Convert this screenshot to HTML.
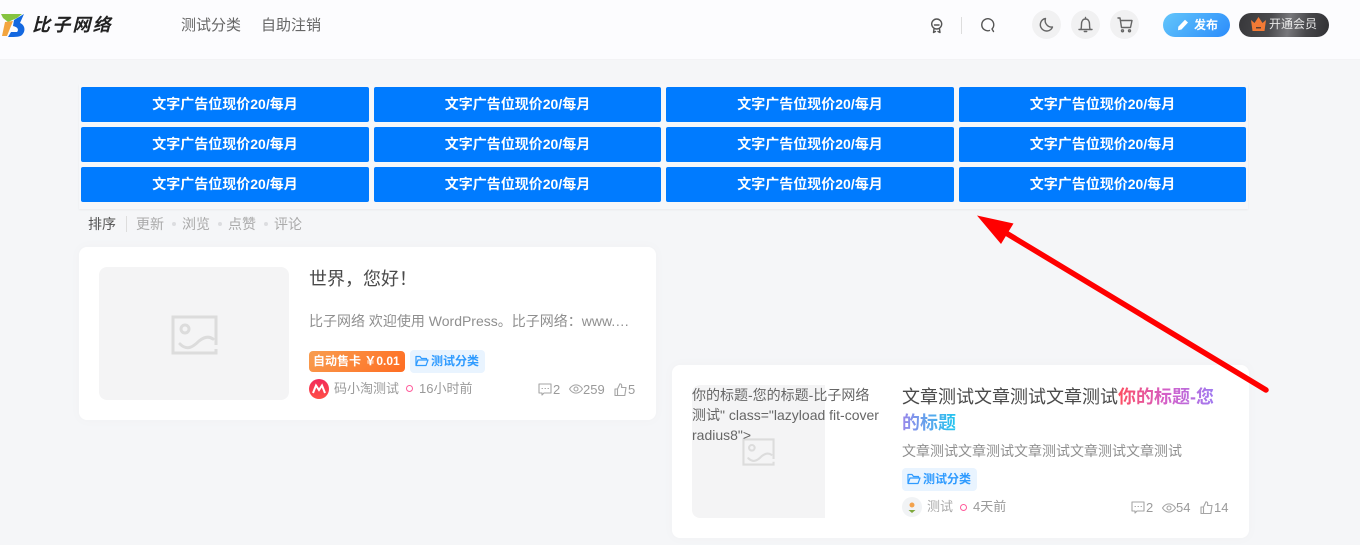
<!DOCTYPE html>
<html lang="zh"><head><meta charset="utf-8"><title>比子网络</title>
<style>
*{box-sizing:border-box;margin:0;padding:0}
html,body{width:1360px;height:545px;overflow:hidden}
body{position:relative;background:#f5f6f8;font-family:"Liberation Sans","Noto Sans CJK SC",sans-serif;color:#4e5358}
.a{position:absolute;white-space:nowrap}
.ad{position:absolute;height:35px;background:#007bff;border-radius:2px;color:#fff;font-size:14px;font-weight:700;line-height:34px;text-align:center}
.card{position:absolute;background:#fff;border-radius:8px;box-shadow:0 0 10px rgba(116,116,116,.04)}
.tag{position:absolute;height:23px;background:#e9f4ff;border-radius:4px;color:#2f9bff;font-size:12px;font-weight:700;line-height:23px;white-space:nowrap}
.m{font-size:12.5px;color:#9a9a9a;line-height:18px}
svg{position:absolute;overflow:visible}
.ic{fill:none;stroke:#555;stroke-width:1.4;stroke-linecap:round;stroke-linejoin:round}
.g{fill:none;stroke:#a5a5a5;stroke-width:1.1;stroke-linecap:round;stroke-linejoin:round}
.dot{position:absolute;width:7px;height:7px;border:1.5px solid #ff5b9b;border-radius:50%}
.sd{position:absolute;width:4px;height:4px;border-radius:50%;background:#dcdde0}
</style></head><body>

<div class="a" style="left:0;top:0;width:1360px;height:60px;background:#fcfcfe;border-bottom:1px solid #f3f3f5"></div>

<svg style="left:0;top:13px" width="26" height="24" viewBox="0 0 26 24">
<path d="M1 1H22L17 5L8 9L3 5Z" fill="#86c440"/>
<path d="M5 9L13 8L7 23H2Z" fill="#f3a53f"/>
<path d="M14 7L24 1L20 10C25 12 26 18 22 22C20 24 16 24 8 24L11 19H17C19 17 18 14 13 13Z" fill="#1468e0"/>
</svg>
<div class="a" style="left:32px;top:13px;font-size:18px;font-weight:700;letter-spacing:2.2px;line-height:24px;color:#222;font-style:italic">比子网络</div>
<div class="a" style="left:181px;top:16px;font-size:15px;line-height:20px;color:#666">测试分类</div>
<div class="a" style="left:261px;top:16px;font-size:15px;line-height:20px;color:#666">自助注销</div>

<svg style="left:930px;top:18px" width="14" height="16" viewBox="0 0 14 16"><g class="ic"><circle cx="6.700" cy="6" r="5"/><path d="M4.500 7H9M4 11L3.500 14.500L5.500 13.500M9.500 11L10 14.500L8 13.500"/></g></svg>
<div class="a" style="left:961px;top:17px;width:1px;height:17px;background:#ddd"></div>
<svg style="left:980px;top:18px" width="15" height="15" viewBox="0 0 15 15"><g class="ic"><path d="M12 11A6 6 0 1 0 9.500 12.500M12 11L13.500 13.500"/></g></svg>
<div class="a" style="left:1032px;top:10px;width:29px;height:29px;border-radius:50%;background:#f1f1f2"></div>
<div class="a" style="left:1071px;top:10px;width:29px;height:29px;border-radius:50%;background:#f1f1f2"></div>
<div class="a" style="left:1110px;top:10px;width:29px;height:29px;border-radius:50%;background:#f1f1f2"></div>
<svg style="left:1039px;top:17px" width="15" height="15" viewBox="0 0 15 15"><path class="ic" style="stroke:#666" d="M6.500 1.500A6.300 6.300 0 1 0 13.500 10A6.500 6.500 0 0 1 6.500 1.500Z"/></svg>
<svg style="left:1078px;top:17px" width="15" height="15" viewBox="0 0 15 15"><path class="ic" style="stroke:#666" d="M1 12.500H14M3 12.500C3.500 10 3.500 9 3.500 7C3.500 4 5 2 7.500 2C10 2 11.500 4 11.500 7C11.500 9 11.500 10 12 12.500M6.300 14.500H8.700M7.500 .5V2"/></svg>
<svg style="left:1117px;top:17px" width="16" height="16" viewBox="0 0 16 16"><g class="ic" style="stroke:#666"><path d="M1 1H3L4.500 10.500H13.500L15 3.500H3.500"/><circle cx="5.500" cy="13.800" r="1"/><circle cx="12.500" cy="13.800" r="1"/></g></svg>

<div class="a" style="left:1163px;top:13px;width:67px;height:24px;border-radius:12px;background:linear-gradient(135deg,#63c6fb,#2b8cfb);color:#fff;font-size:12px;font-weight:700;line-height:24px;padding-left:31px">发布</div>
<svg style="left:1177px;top:19px" width="12" height="12" viewBox="0 0 12 12"><path d="M8 .8L11 3.500L4.500 10.500L1 11.300L1.300 7.800Z" fill="#fff"/></svg>
<div class="a" style="left:1239px;top:13px;width:90px;height:24px;border-radius:12px;background:linear-gradient(100deg,#37373a 0,#4a4a4d 35%,#77777b 55%,#47474a 75%,#303033 100%);color:#e8e8e8;font-size:12px;line-height:23px;padding-left:30px">开通会员</div>
<svg style="left:1251px;top:16px" width="15" height="16" viewBox="0 0 15 16"><path d="M0 4L3.500 7L7.500 1L11.500 7L15 4L13.500 15H1.500Z" fill="#f37a35"/><rect x="5" y="11" width="5" height="1.500" fill="#5a4036"/></svg>

<div class="a" style="left:79px;top:84px;width:1169px;height:125px;background:#f6f7f9;box-shadow:0 1px 2px rgba(0,0,0,.05)"></div>
<div class="ad" style="left:81px;top:87px;width:288px">文字广告位现价20/每月</div>
<div class="ad" style="left:374px;top:87px;width:287px">文字广告位现价20/每月</div>
<div class="ad" style="left:666px;top:87px;width:288px">文字广告位现价20/每月</div>
<div class="ad" style="left:959px;top:87px;width:287px">文字广告位现价20/每月</div>
<div class="ad" style="left:81px;top:127px;width:288px">文字广告位现价20/每月</div>
<div class="ad" style="left:374px;top:127px;width:287px">文字广告位现价20/每月</div>
<div class="ad" style="left:666px;top:127px;width:288px">文字广告位现价20/每月</div>
<div class="ad" style="left:959px;top:127px;width:287px">文字广告位现价20/每月</div>
<div class="ad" style="left:81px;top:167px;width:288px">文字广告位现价20/每月</div>
<div class="ad" style="left:374px;top:167px;width:287px">文字广告位现价20/每月</div>
<div class="ad" style="left:666px;top:167px;width:288px">文字广告位现价20/每月</div>
<div class="ad" style="left:959px;top:167px;width:287px">文字广告位现价20/每月</div>

<div class="a" style="left:88px;top:215px;font-size:14px;line-height:19px;color:#555">排序</div>
<div class="a" style="left:126px;top:216px;width:1px;height:16px;background:#ddd"></div>
<div class="a" style="left:136px;top:215px;font-size:14px;line-height:19px;color:#aaa">更新</div>
<div class="sd" style="left:172px;top:222px"></div>
<div class="a" style="left:182px;top:215px;font-size:14px;line-height:19px;color:#aaa">浏览</div>
<div class="sd" style="left:218px;top:222px"></div>
<div class="a" style="left:228px;top:215px;font-size:14px;line-height:19px;color:#aaa">点赞</div>
<div class="sd" style="left:264px;top:222px"></div>
<div class="a" style="left:274px;top:215px;font-size:14px;line-height:19px;color:#aaa">评论</div>

<div class="card" style="left:79px;top:247px;width:577px;height:173px"></div>
<div class="a" style="left:99px;top:267px;width:190px;height:133px;background:#f4f4f5;border-radius:8px"></div>
<svg style="left:171px;top:315px" width="47" height="40" viewBox="0 0 47 40"><g fill="none" stroke="#dcdcdc" stroke-width="3"><path d="M45 30V2H2V38H45V34"/><circle cx="14" cy="14" r="4"/><path d="M9 29C16 36 22 32 28 26C33 22 38 21 42 24" stroke-linecap="round"/></g></svg>
<div class="a" style="left:309px;top:266px;font-size:18px;line-height:26px;color:#4a4a4a">世界，您好！</div>
<div class="a" style="left:309px;top:311px;font-size:14px;line-height:20px;color:#8f8f8f">比子网络 欢迎使用 WordPress。比子网络：www.…</div>
<div class="a" style="left:309px;top:351px;width:96px;height:21px;border-radius:4px;background:linear-gradient(135deg,#f89d4f,#ff6d22);color:#fff;font-size:12px;font-weight:700;line-height:21px;padding-left:4px">自动售卡 ￥0.01</div>
<div class="tag" style="left:410px;top:350px;width:75px;padding-left:21px">测试分类</div>
<svg style="left:415px;top:355px" width="14" height="12" viewBox="0 0 14 12"><path d="M1 10.500V1.500H5L6.500 3.500H11.500V5M1 10.500H11L13 5H3Z" fill="none" stroke="#2f9bff" stroke-width="1.200" stroke-linejoin="round"/></svg>
<div class="a" style="left:309px;top:379px;width:20px;height:20px;border-radius:50%;background:linear-gradient(#f2295b,#ff4f45)"></div>
<svg style="left:312px;top:384px" width="14" height="10" viewBox="0 0 14 10"><path d="M1 9L4 1.500L7 6L10 1.500L13 9" fill="none" stroke="#fff" stroke-width="2"/></svg>
<div class="a m" style="left:334px;top:380px;font-size:13px;color:#9a9a9a">码小淘测试</div>
<div class="dot" style="left:406px;top:385px"></div>
<div class="a m" style="left:419px;top:380px;font-size:13px;color:#9a9a9a">16小时前</div>

<svg style="left:538px;top:383px" width="14" height="13" viewBox="0 0 14 13"><g class="g"><path d="M1 1H13V10H6L4 12V10H1Z"/><path d="M4 5.500H4.500M7 5.500H7.500M10 5.500H10.500"/></g></svg>
<div class="a m" style="left:553px;top:381px;font-size:13px">2</div>
<svg style="left:569px;top:384px" width="14" height="10" viewBox="0 0 14 10"><g class="g"><path d="M.5 5C4 -.5 10 -.5 13.500 5C10 10.500 4 10.500 .5 5Z"/><circle cx="7" cy="5" r="2"/></g></svg>
<div class="a m" style="left:583px;top:381px;font-size:13px">259</div>
<svg style="left:614px;top:383px" width="13" height="13" viewBox="0 0 13 13"><path class="g" d="M1 6H3.500V12.500H1ZM3.500 6L6 .8C7.500 .8 8 2 7.500 4.500H12L10.800 12.500H3.500"/></svg>
<div class="a m" style="left:628px;top:381px;font-size:13px">5</div>

<div class="card" style="left:672px;top:365px;width:577px;height:173px"></div>
<div class="a" style="left:692px;top:385px;width:133px;height:133px;background:#f4f4f5;border-radius:8px 0 0 8px"></div>
<svg style="left:742px;top:438px" width="33" height="28" viewBox="0 0 47 40"><g fill="none" stroke="#dcdcdc" stroke-width="3"><path d="M45 30V2H2V38H45V34"/><circle cx="14" cy="14" r="4"/><path d="M9 29C16 36 22 32 28 26C33 22 38 21 42 24" stroke-linecap="round"/></g></svg>
<div class="a" style="left:692px;top:385px;font-size:14px;line-height:20px;color:#666">你的标题-您的标题-比子网络<br>测试" class="lazyload fit-cover<br>radius8"&gt;</div>
<div class="a" style="left:902px;top:384px;width:327px;white-space:normal;font-size:18px;line-height:26px;color:#4a4a4a">文章测试文章测试文章测试<b style="font-weight:700;background:linear-gradient(90deg,#ff4d5e,#d45fc9 50%,#a07af0 100%);-webkit-background-clip:text;background-clip:text;color:transparent">你的标题-您</b><br><b style="font-weight:700;background:linear-gradient(90deg,#9a86ea,#1fc5ef);-webkit-background-clip:text;background-clip:text;color:transparent">的标题</b></div>
<div class="a" style="left:902px;top:442px;font-size:14px;line-height:18px;color:#8f8f8f">文章测试文章测试文章测试文章测试文章测试</div>
<div class="tag" style="left:902px;top:468px;width:75px;padding-left:21px">测试分类</div>
<svg style="left:907px;top:473px" width="14" height="12" viewBox="0 0 14 12"><path d="M1 10.500V1.500H5L6.500 3.500H11.500V5M1 10.500H11L13 5H3Z" fill="none" stroke="#2f9bff" stroke-width="1.200" stroke-linejoin="round"/></svg>
<div class="a" style="left:902px;top:497px;width:20px;height:20px;border-radius:50%;background:#f1f3f5"></div>
<svg style="left:907px;top:502px" width="10" height="11" viewBox="0 0 10 11"><circle cx="5" cy="3" r="2.500" fill="#f3a24c"/><path d="M1.500 8H8.500L5 11Z" fill="#7da83c"/></svg>
<div class="a m" style="left:927px;top:498px;font-size:13px;color:#aaa">测试</div>
<div class="dot" style="left:960px;top:504px"></div>
<div class="a m" style="left:973px;top:498px;font-size:13px;color:#9a9a9a">4天前</div>

<svg style="left:1131px;top:501px" width="14" height="13" viewBox="0 0 14 13"><g class="g"><path d="M1 1H13V10H6L4 12V10H1Z"/><path d="M4 5.500H4.500M7 5.500H7.500M10 5.500H10.500"/></g></svg>
<div class="a m" style="left:1146px;top:499px;font-size:13px">2</div>
<svg style="left:1162px;top:503px" width="14" height="10" viewBox="0 0 14 10"><g class="g"><path d="M.5 5C4 -.5 10 -.5 13.500 5C10 10.500 4 10.500 .5 5Z"/><circle cx="7" cy="5" r="2"/></g></svg>
<div class="a m" style="left:1176px;top:499px;font-size:13px">54</div>
<svg style="left:1200px;top:501px" width="13" height="13" viewBox="0 0 13 13"><path class="g" d="M1 6H3.500V12.500H1ZM3.500 6L6 .8C7.500 .8 8 2 7.500 4.500H12L10.800 12.500H3.500"/></svg>
<div class="a m" style="left:1214px;top:499px;font-size:13px">14</div>

<svg style="left:0;top:0" width="1360" height="545" viewBox="0 0 1360 545"><path d="M1266 390L1006 233" stroke="#ff0000" stroke-width="5.500" stroke-linecap="round" fill="none"/><path d="M977 215.500L1013.500 223.500L1001 244Z" fill="#ff0000"/></svg>
</body></html>
